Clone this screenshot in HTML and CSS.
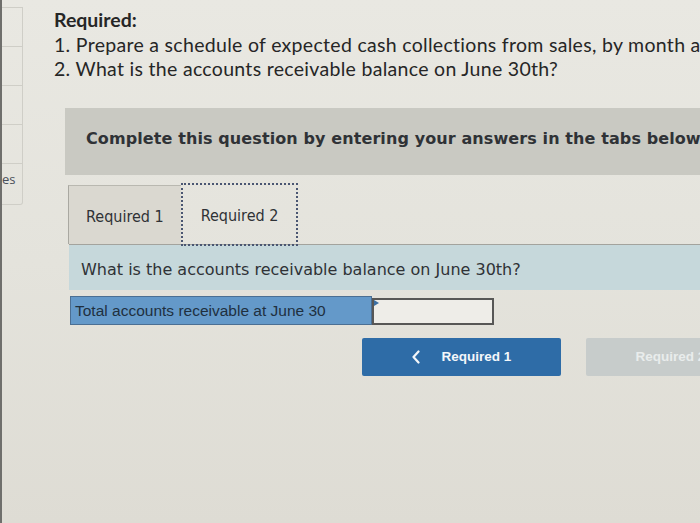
FILE: index.html
```html
<!DOCTYPE html>
<html lang="en">
<head>
<meta charset="utf-8">
<title>Required</title>
<link rel="stylesheet" href="styles.css">
</head>
<body>
<div class="screen">
  <aside class="sidebar">
    <div class="cell"></div>
    <div class="cell"></div>
    <div class="cell"></div>
    <div class="cell"></div>
    <div class="cell last"><span>es</span></div>
  </aside>
  <main class="main">
    <div class="required">
      <div class="req-title">Required:</div>
      <div class="req-line">1. Prepare a schedule of expected cash collections from sales, by month and in total, for the second quarter.</div>
      <div class="req-line">2. What is the accounts receivable balance on June 30th?</div>
    </div>
    <div class="instructions">Complete this question by entering your answers in the tabs below.</div>
    <section class="question">
      <div class="tabs">
        <div class="tab tab-inactive">Required 1</div>
        <div class="tab tab-active">Required 2</div>
      </div>
      <div class="prompt">What is the accounts receivable balance on June 30th?</div>
      <div class="answer-row">
        <div class="answer-label">Total accounts receivable at June 30</div>
        <div class="answer-input"><span class="marker"></span></div>
      </div>
      <div class="nav">
        <button class="nav-btn prev"><svg class="chev" width="8" height="14" viewBox="0 0 8 14"><polyline points="6.5,1.5 1.5,7 6.5,12.5" fill="none" stroke="currentColor" stroke-width="2.2" stroke-linecap="round" stroke-linejoin="round"/></svg><span>Required 1</span></button>
        <button class="nav-btn next" disabled><span>Required 2</span><svg class="chev" width="8" height="14" viewBox="0 0 8 14"><polyline points="1.5,1.5 6.5,7 1.5,12.5" fill="none" stroke="currentColor" stroke-width="2.2" stroke-linecap="round" stroke-linejoin="round"/></svg></button>
      </div>
    </section>
  </main>
</div>
</body>
</html>
```
FILE: styles.css
```css
html, body {
  margin: 0;
  padding: 0;
  width: 700px;
  height: 523px;
  overflow: hidden;
}
body {
  background: linear-gradient(180deg, #e9e8e2 0%, #e4e3dc 50%, #dedcd4 100%);
  color: #262626;
}
.screen {
  display: flex;
  height: 523px;
  border-left: 2px solid #6f6f6c;
  box-sizing: border-box;
}
.sidebar {
  width: 20px;
  flex: none;
  margin-top: 7px;
  align-self: flex-start;
  border: 1px solid #cfcec7;
  border-left: none;
  border-radius: 0 0 3px 0;
}
.cell {
  height: 38px;
  border-bottom: 1px solid #cfcec7;
}
.cell.last {
  height: 34px;
  border-bottom: none;
  font-family: "Open Sans", "Liberation Sans", sans-serif;
  font-size: 13px;
  color: #4a4f5a;
  line-height: 18px;
  padding-top: 6px;
  white-space: nowrap;
}
.main {
  flex: 1;
  min-width: 0;
  padding-left: 31px;
  overflow: hidden;
}
.required {
  padding-top: 8px;
  font-family: Lato, "Open Sans", sans-serif;
  font-size: 19.5px;
  letter-spacing: 0.3px;
  line-height: 24.5px;
  color: #262626;
  white-space: nowrap;
}
.req-title {
  font-weight: 700;
  letter-spacing: 0;
}
.instructions {
  margin-top: 26px;
  margin-left: 11px;
  height: 67px;
  width: 700px;
  box-sizing: border-box;
  display: flex;
  align-items: center;
  padding-left: 21px;
  padding-bottom: 5px;
  background: #c9c9c2;
  font-family: "DejaVu Sans", sans-serif;
  font-weight: 700;
  font-size: 16px;
  letter-spacing: 0.1px;
  color: #2f3236;
  white-space: nowrap;
}
.question {
  margin-left: 15px;
  margin-top: 10px;
  width: 700px;
}
.tabs {
  display: flex;
  height: 60px;
  border-bottom: 1px solid #a3a39d;
  box-sizing: border-box;
}
.tab {
  display: flex;
  align-items: center;
  padding: 3px 17px 0;
  font-family: "DejaVu Sans Condensed", "DejaVu Sans", sans-serif;
  font-size: 16px;
  color: #2f3236;
}
.tab-inactive {
  margin-left: -1px;
  background: #dad8d0;
  border-top: 1px solid #b9b8b0;
  border-left: 1px solid #a9a8a1;
}
.tab-active {
  margin-left: 2px;
  padding: 3px 18px 0;
  outline: 2px dotted #4a5672;
  outline-offset: 0;
}
.prompt {
  height: 45px;
  box-sizing: border-box;
  display: flex;
  align-items: center;
  padding-left: 12px;
  padding-top: 4px;
  background: #c6d8db;
  font-family: "DejaVu Sans", sans-serif;
  font-size: 16px;
  color: #2f3236;
  white-space: nowrap;
}
.answer-row {
  display: flex;
  align-items: flex-end;
  margin-top: 6px;
  margin-left: 1px;
  height: 29px;
}
.answer-label {
  width: 302px;
  height: 29px;
  box-sizing: border-box;
  border: 1px solid #4b6f93;
  background: #6499c9;
  display: flex;
  align-items: center;
  padding-left: 4px;
  padding-top: 1px;
  font-family: "Liberation Sans", Arial, sans-serif;
  font-size: 15.5px;
  color: #20303f;
  white-space: nowrap;
}
.answer-input {
  position: relative;
  width: 122px;
  height: 27px;
  box-sizing: border-box;
  border: 2px solid #575756;
  background: #eeede8;
}
.marker {
  position: absolute;
  left: 0;
  top: 0;
  width: 0;
  height: 0;
  border-top: 3px solid transparent;
  border-bottom: 3px solid transparent;
  border-left: 5px solid #3b6fa3;
}
.nav {
  display: flex;
  gap: 25px;
  margin-top: 13px;
  padding-left: 293px;
}
.nav-btn {
  flex: none;
  width: 199px;
  height: 38px;
  border: none;
  border-radius: 2px;
  display: flex;
  align-items: center;
  justify-content: center;
  gap: 22px;
  font-family: "Liberation Sans", Arial, sans-serif;
  font-weight: 700;
  font-size: 13.5px;
  padding: 0;
}
.prev {
  background: #2e6ca7;
  color: #f4f7fa;
}
.next {
  background: #c7cccb;
  color: #e9ecec;
}
.chev {
  display: block;
  flex: none;
}
```
